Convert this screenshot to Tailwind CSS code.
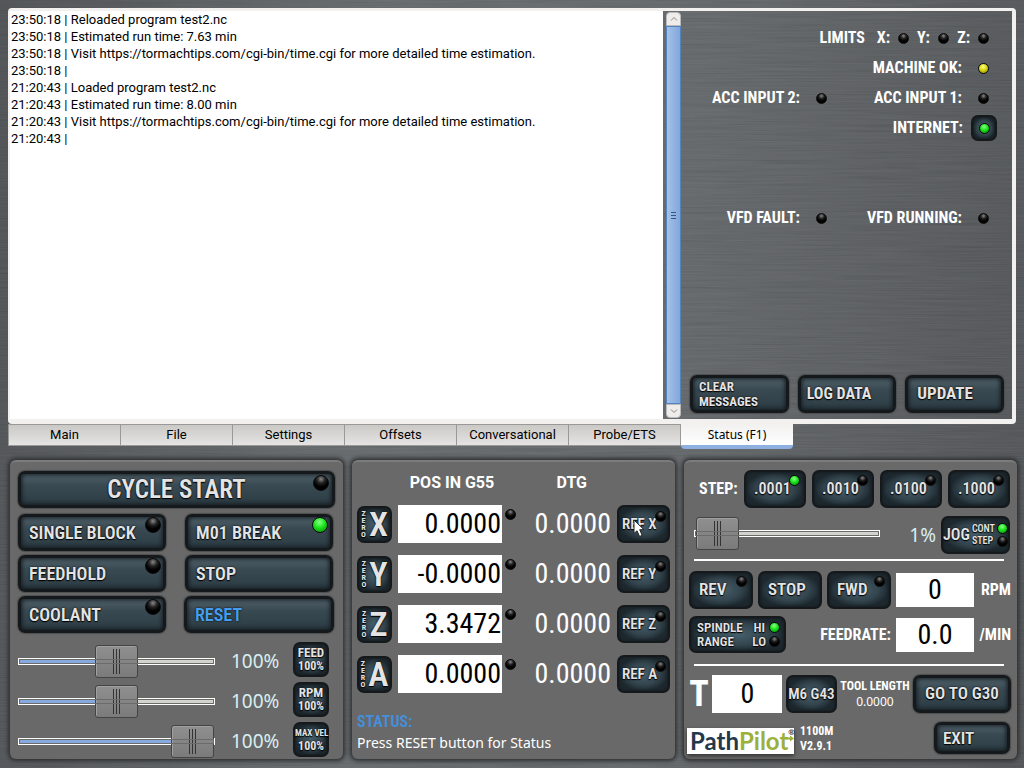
<!DOCTYPE html>
<html lang="en">
<head>
    <meta charset="UTF-8">
    <meta name="viewport" content="width=device-width, initial-scale=1.0">
    <title>PathPilot</title>
    <script src="https://cdn.jsdelivr.net/npm/@tailwindcss/browser@4"></script>
    <style>
        /* Button faces */
        .key {
            border: 3px solid #15191b;
            border-radius: 7px;
            background: linear-gradient(#50616a, #394952 38%, #33434b 70%, #293940);
            box-shadow: inset 0 0 4px 1px #141c20, 0 0 1px 1px #4c4e4f;
        }
        .key-sm {
            border: 2px solid #15191b;
            border-radius: 7px;
            background: radial-gradient(closest-side, #46606c, #33444d 65%, #1d282e);
            box-shadow: inset 0 0 3px #10171a;
        }
        .key-text {
            color: #e4e4e4;
            text-shadow: 0 0 2px #000, 0 1px 1px #000;
        }

        /* Indicator lamps */
        .led {
            flex: none;
            width: 11px;
            height: 11px;
            border: 1px solid #0a0a0a;
            border-radius: 50%;
            background: radial-gradient(circle at 50% 22%, #888 0, #222 32%, #000 60%);
        }
        .led-lg { width: 16px; height: 16px; }
        .led-green { background: radial-gradient(circle at 45% 30%, #8f8 0, #1be41b 45%, #067a06 100%); }
        .led-yellow { background: radial-gradient(circle at 45% 30%, #ff8 0, #d8d810 45%, #7a7a06 100%); }

        /* Sliders */
        .slider { appearance: none; background: none; }
        .slider::-webkit-slider-runnable-track {
            height: 7px;
            border: 1px solid #fff;
            outline: 1px solid #6b6b6b;
            outline-offset: -2px;
            background: linear-gradient(90deg, #86aadb var(--fill), #d3d3cd var(--fill));
        }
        .slider::-webkit-slider-thumb {
            appearance: none;
            width: 43px;
            height: 33px;
            margin-top: -14px;
            border: 1px solid #444;
            border-radius: 3px;
            background:
                linear-gradient(#333, #333) 17px 50% / 1px 25px no-repeat,
                linear-gradient(#333, #333) 20px 50% / 1px 25px no-repeat,
                linear-gradient(#333, #333) 23px 50% / 1px 25px no-repeat,
                linear-gradient(#8f8f8f, #7b7b7b);
            box-shadow: inset 1px 1px 0 #a0a0a0;
        }
    </style>
</head>
<body class="relative isolate min-h-screen flex flex-col bg-[linear-gradient(95deg,#45484b,#5d6265_35%,#5c6063_65%,#484b4e)] font-['Roboto_Condensed',sans-serif] text-white">

    <!-- Brushed metal -->
    <svg class="absolute inset-0 -z-10 w-full h-full opacity-20" aria-hidden="true">
        <filter id="brushed">
            <feTurbulence type="fractalNoise" baseFrequency="0.012 0.7" numOctaves="3" seed="4"/>
            <feColorMatrix type="saturate" values="0"/>
            <feComponentTransfer><feFuncA type="linear" slope="0" intercept="0.6"/></feComponentTransfer>
        </filter>
        <rect width="100%" height="100%" filter="url(#brushed)"/>
    </svg>

    <!-- Notebook -->
    <main class="flex-1 flex flex-col mx-2 mt-2">
        <div class="flex-1 flex border-2 border-b-[5px] border-[#f2f1f0] border-t-[3px] border-r-4 rounded-sm">
            <div role="log" class="flex-1 bg-white text-black font-[Roboto] text-[13px] leading-[17px] pl-px">
                <p>23:50:18 | Reloaded program test2.nc</p>
                <p>23:50:18 | Estimated run time: 7.63 min</p>
                <p>23:50:18 | Visit https://tormachtips.com/cgi-bin/time.cgi for more detailed time estimation.</p>
                <p>23:50:18 |</p>
                <p>21:20:43 | Loaded program test2.nc</p>
                <p>21:20:43 | Estimated run time: 8.00 min</p>
                <p>21:20:43 | Visit https://tormachtips.com/cgi-bin/time.cgi for more detailed time estimation.</p>
                <p>21:20:43 |</p>
            </div>

            <!-- Scrollbar -->
            <div class="w-[15px] ml-[3px] my-px flex flex-col">
                <button aria-label="Scroll up" class="h-[14px] bg-[#eeedeb] border border-[#bbb] rounded-t flex items-center justify-center">
                    <svg class="w-2 h-2" viewBox="0 0 8 8" fill="none" stroke="#888"><path d="M1 5.500L4 2.500L7 5.500"/></svg>
                </button>
                <div class="flex-1 flex flex-col items-center justify-center gap-[2px] border border-[#5583bd] bg-linear-to-r from-[#a3c1ea] to-[#82a7da]">
                    <span class="w-[5px] h-px bg-[#31578c]"></span>
                    <span class="w-[5px] h-px bg-[#31578c]"></span>
                    <span class="w-[5px] h-px bg-[#31578c]"></span>
                </div>
                <button aria-label="Scroll down" class="h-[14px] bg-[#eeedeb] border border-[#bbb] rounded-b flex items-center justify-center">
                    <svg class="w-2 h-2" viewBox="0 0 8 8" fill="none" stroke="#888"><path d="M1 2.500L4 5.500L7 2.500"/></svg>
                </button>
            </div>

            <!-- Machine status -->
            <section class="w-[331px] flex flex-col pt-3 pb-[6px] font-bold text-[16px]">
                <div class="grid grid-cols-[1fr_162px] auto-rows-[30px] pr-[23px]">
                    <div class="col-span-2 flex items-center justify-end">
                        <span class="mr-1">LIMITS</span>
                        <div class="w-10 flex items-center justify-end gap-2">X:<span class="led"></span></div>
                        <div class="w-10 flex items-center justify-end gap-2">Y:<span class="led"></span></div>
                        <div class="w-10 flex items-center justify-end gap-2">Z:<span class="led"></span></div>
                    </div>
                    <div class="col-start-2 flex items-center justify-end gap-4">MACHINE OK:<span class="led led-yellow"></span></div>
                    <div class="col-start-1 flex items-center justify-end gap-4">ACC INPUT 2:<span class="led"></span></div>
                    <div class="flex items-center justify-end gap-4">ACC INPUT 1:<span class="led"></span></div>
                    <div class="col-start-2 flex items-center justify-end gap-2 -mr-2">INTERNET:
                        <button aria-label="Internet" class="key-sm w-[26px] h-[26px] flex items-center justify-center"><span class="led led-green"></span></button>
                    </div>
                    <div class="row-start-7 flex items-center justify-end gap-4">VFD FAULT:<span class="led"></span></div>
                    <div class="row-start-7 flex items-center justify-end gap-4">VFD RUNNING:<span class="led"></span></div>
                </div>
                <div class="mt-auto grid grid-cols-3 gap-[9px] pl-[9px] pr-2">
                    <button class="key h-[38px] pl-[6px] text-left"><span class="key-text block text-[13px] leading-[15px]">CLEAR<br>MESSAGES</span></button>
                    <button class="key h-[38px] pl-[6px] text-left"><span class="key-text text-[16px]">LOG DATA</span></button>
                    <button class="key h-[38px] pl-[9px] text-left"><span class="key-text text-[17px]">UPDATE</span></button>
                </div>
            </section>
        </div>

        <nav role="tablist" class="flex h-[25px] items-start text-black font-[Roboto] text-[13px]">
            <button role="tab" class="w-[113px] h-[22px] border border-[#999] bg-linear-to-b from-[#cbc9c6] to-[#e6e4e2]">Main</button>
            <button role="tab" class="w-28 h-[22px] border border-l-0 border-[#999] bg-linear-to-b from-[#cbc9c6] to-[#e6e4e2]">File</button>
            <button role="tab" class="w-28 h-[22px] border border-l-0 border-[#999] bg-linear-to-b from-[#cbc9c6] to-[#e6e4e2]">Settings</button>
            <button role="tab" class="w-28 h-[22px] border border-l-0 border-[#999] bg-linear-to-b from-[#cbc9c6] to-[#e6e4e2]">Offsets</button>
            <button role="tab" class="w-28 h-[22px] border border-l-0 border-[#999] bg-linear-to-b from-[#cbc9c6] to-[#e6e4e2]">Conversational</button>
            <button role="tab" class="w-28 h-[22px] border border-l-0 border-[#999] bg-linear-to-b from-[#cbc9c6] to-[#e6e4e2]">Probe/ETS</button>
            <button role="tab" aria-selected="true" class="w-28 h-[25px] border-b-4 border-[#8db0e0] rounded-b-sm bg-linear-to-b from-[#f2f1f0] to-white font-['Noto_Sans'] text-[12px]">Status (F1)</button>
        </nav>
    </main>

    <div class="grid grid-cols-[333fr_323fr_333fr] gap-[9px] mt-[11px] mb-[9px] ml-[10px] mr-[7px]">

        <!-- Program control -->
        <section class="bg-[#696969] rounded-md border-t-2 border-[#7c7c7c] shadow-[0_0_4px_2px_#2d2f31] px-2 pt-[9px] pb-[2px]">
            <button class="key relative w-full h-[37px]"><span class="key-text font-semibold text-[25px] leading-[30px]">CYCLE START</span><span class="led led-lg absolute right-[3px] top-[1px]"></span></button>
            <div class="grid grid-cols-2 gap-x-[19px] gap-y-1 mt-[6px] pr-[2px] font-semibold text-[18px]">
                <button class="key relative h-[37px] pl-2 text-left"><span class="key-text">SINGLE BLOCK</span><span class="led led-lg absolute right-[2px] top-0"></span></button>
                <button class="key relative h-[37px] pl-2 text-left"><span class="key-text">M01 BREAK</span><span class="led led-lg led-green absolute right-[2px] top-0"></span></button>
                <button class="key relative h-[37px] pl-2 text-left"><span class="key-text">FEEDHOLD</span><span class="led led-lg absolute right-[2px] top-0"></span></button>
                <button class="key h-[37px] pl-2 text-left"><span class="key-text">STOP</span></button>
                <button class="key relative h-[37px] pl-2 text-left"><span class="key-text">COOLANT</span><span class="led led-lg absolute right-[2px] top-0"></span></button>
                <button class="key h-[37px] pl-2 text-left -mx-px"><span class="text-[#459df0] [text-shadow:0_0_2px_#000]">RESET</span></button>
            </div>
            <div class="mt-[9px] pr-[6px] flex flex-col gap-[5px]">
                <div class="flex items-center h-[35px]">
                    <input type="range" aria-label="Feed override" min="0" max="200" value="100" class="slider flex-1 min-w-0 h-[37px] pt-1" style="--fill: 50%">
                    <output class="w-[78px] pl-4 pt-1 font-['Noto_Sans'] text-[19px] text-[#d9eef0]">100%</output>
                    <button class="key-sm w-9 h-[35px] font-bold"><span class="key-text block text-[13px] leading-[14px]">FEED</span><span class="key-text block text-[12px] leading-[13px]">100%</span></button>
                </div>
                <div class="flex items-center h-[35px]">
                    <input type="range" aria-label="RPM override" min="0" max="200" value="100" class="slider flex-1 min-w-0 h-[37px] pt-1" style="--fill: 50%">
                    <output class="w-[78px] pl-4 pt-1 font-['Noto_Sans'] text-[19px] text-[#d9eef0]">100%</output>
                    <button class="key-sm w-9 h-[35px] font-bold"><span class="key-text block text-[13px] leading-[14px]">RPM</span><span class="key-text block text-[12px] leading-[13px]">100%</span></button>
                </div>
                <div class="flex items-center h-[35px]">
                    <input type="range" aria-label="Max velocity" min="0" max="100" value="100" class="slider flex-1 min-w-0 h-[37px] pt-1" style="--fill: 99%">
                    <output class="w-[78px] pl-4 pt-1 font-['Noto_Sans'] text-[19px] text-[#d9eef0]">100%</output>
                    <button class="key-sm w-9 h-[35px] font-bold whitespace-nowrap"><span class="key-text block text-[9px] leading-[14px]">MAX VEL</span><span class="key-text block text-[12px] leading-[13px]">100%</span></button>
                </div>
            </div>
        </section>

        <!-- Position readout -->
        <section class="bg-[#696969] rounded-md border-t-2 border-[#7c7c7c] shadow-[0_0_4px_2px_#2d2f31] px-[5px] pt-[5px]">
            <table class="w-full table-fixed">
                <thead>
                    <tr class="h-8 font-[Roboto] text-[16px]">
                        <th class="w-[41px]"></th>
                        <th class="w-[104px] font-bold whitespace-nowrap pl-1">POS IN G55</th>
                        <th class="font-bold text-right pr-[30px]">DTG</th>
                        <th class="w-[53px]"></th>
                    </tr>
                </thead>
                <tbody>
                    <tr class="h-[50px]">
                        <td><button aria-label="Zero X" class="key-sm w-[35px] h-[37px] flex items-center justify-center gap-[3px]"><span class="key-text text-[8px] leading-[7px] font-bold">Z<br>E<br>R<br>O</span><span class="key-text text-[34px] leading-[32px] font-semibold">X</span></button></td>
                        <td><input type="text" aria-label="X position" value="0.0000" class="block w-full h-[38px] bg-white text-black text-[28px] text-right pr-[1px]"></td>
                        <td class="pr-[6px]"><div class="flex justify-between pl-[3px]"><span class="led mt-1"></span><span class="text-[28px] leading-[38px]">0.0000</span></div></td>
                        <td class="relative"><button class="key-sm relative w-full h-[38px] font-semibold text-left pl-[3px]"><span class="key-text text-[15px] whitespace-nowrap">REF X</span><span class="led absolute right-[2px] top-1"></span></button>
                            <svg class="absolute left-4 top-[20px] w-[13px] h-[19px]" viewBox="0 0 13 19" aria-hidden="true"><path d="M1 1V14.500L4 11.800L6.600 17.500L9.200 16.300L6.700 10.700H11Z" fill="#fff" stroke="#222"/></svg>
                        </td>
                    </tr>
                    <tr class="h-[50px]">
                        <td><button aria-label="Zero Y" class="key-sm w-[35px] h-[37px] flex items-center justify-center gap-[3px]"><span class="key-text text-[8px] leading-[7px] font-bold">Z<br>E<br>R<br>O</span><span class="key-text text-[34px] leading-[32px] font-semibold">Y</span></button></td>
                        <td><input type="text" aria-label="Y position" value="-0.0000" class="block w-full h-[38px] bg-white text-black text-[28px] text-right pr-[1px]"></td>
                        <td class="pr-[6px]"><div class="flex justify-between pl-[3px]"><span class="led mt-1"></span><span class="text-[28px] leading-[38px]">0.0000</span></div></td>
                        <td><button class="key-sm relative w-full h-[38px] font-semibold text-left pl-[3px]"><span class="key-text text-[15px] whitespace-nowrap">REF Y</span><span class="led absolute right-[2px] top-1"></span></button></td>
                    </tr>
                    <tr class="h-[50px]">
                        <td><button aria-label="Zero Z" class="key-sm w-[35px] h-[37px] flex items-center justify-center gap-[3px]"><span class="key-text text-[8px] leading-[7px] font-bold">Z<br>E<br>R<br>O</span><span class="key-text text-[34px] leading-[32px] font-semibold">Z</span></button></td>
                        <td><input type="text" aria-label="Z position" value="3.3472" class="block w-full h-[38px] bg-white text-black text-[28px] text-right pr-[1px]"></td>
                        <td class="pr-[6px]"><div class="flex justify-between pl-[3px]"><span class="led mt-1"></span><span class="text-[28px] leading-[38px]">0.0000</span></div></td>
                        <td><button class="key-sm relative w-full h-[38px] font-semibold text-left pl-[3px]"><span class="key-text text-[15px] whitespace-nowrap">REF Z</span><span class="led absolute right-[2px] top-1"></span></button></td>
                    </tr>
                    <tr class="h-[50px]">
                        <td><button aria-label="Zero A" class="key-sm w-[35px] h-[37px] flex items-center justify-center gap-[3px]"><span class="key-text text-[8px] leading-[7px] font-bold">Z<br>E<br>R<br>O</span><span class="key-text text-[34px] leading-[32px] font-semibold">A</span></button></td>
                        <td><input type="text" aria-label="A position" value="0.0000" class="block w-full h-[38px] bg-white text-black text-[28px] text-right pr-[1px]"></td>
                        <td class="pr-[6px]"><div class="flex justify-between pl-[3px]"><span class="led mt-1"></span><span class="text-[28px] leading-[38px]">0.0000</span></div></td>
                        <td><button class="key-sm relative w-full h-[38px] font-semibold text-left pl-[3px]"><span class="key-text text-[15px] whitespace-nowrap">REF A</span><span class="led absolute right-[2px] top-1"></span></button></td>
                    </tr>
                </tbody>
            </table>
            <p class="mt-3 text-[16px] leading-[22px] font-semibold text-[#4390dc]">STATUS:</p>
            <p class="font-['Noto_Sans'] text-[14px] leading-5">Press RESET button for Status</p>
        </section>

        <!-- Jog, spindle and tool -->
        <section class="bg-[#696969] rounded-md border-t-2 border-[#7c7c7c] shadow-[0_0_4px_2px_#2d2f31] pl-[5px] pr-[6px] pt-2 font-semibold whitespace-nowrap">
            <div class="flex items-center gap-[6px] pl-[10px] pr-px">
                <span class="mr-auto text-[16px] font-bold">STEP:</span>
                <button class="key-sm relative w-[62px] h-[38px] text-left pl-2"><span class="key-text text-[16px]">.0001</span><span class="led led-green absolute right-1 top-[3px]"></span></button>
                <button class="key-sm relative w-[62px] h-[38px] text-left pl-2"><span class="key-text text-[16px]">.0010</span><span class="led absolute right-1 top-[3px]"></span></button>
                <button class="key-sm relative w-[62px] h-[38px] text-left pl-2"><span class="key-text text-[16px]">.0100</span><span class="led absolute right-1 top-[3px]"></span></button>
                <button class="key-sm relative w-[62px] h-[38px] text-left pl-2"><span class="key-text text-[16px]">.1000</span><span class="led absolute right-1 top-[3px]"></span></button>
            </div>
            <div class="flex items-center mt-2 pl-[5px] pr-px">
                <input type="range" aria-label="Jog speed" min="0" max="100" value="1" class="slider flex-1 min-w-0 h-[33px] mb-1" style="--fill: 1%">
                <output class="w-[61px] pr-[5px] text-right font-['Noto_Sans'] font-normal text-[19px] text-[#d9eef0]">1%</output>
                <button class="key-sm w-[69px] h-[38px] flex items-center justify-center gap-[2px]">
                    <span class="key-text text-[16px]">JOG</span>
                    <span class="key-text text-[10px] leading-[12px] text-left">CONT<br>STEP</span>
                    <span class="flex flex-col gap-[2px]"><span class="led led-green"></span><span class="led"></span></span>
                </button>
            </div>
            <hr class="mt-[5px] ml-[5px] mr-[7px] border-t-2 border-white">
            <div class="grid grid-cols-[1fr_78px_32px] items-center gap-x-[5px] mt-[10px]">
                <div class="flex justify-between">
                    <button class="key-sm relative w-[64px] h-[38px] text-left pl-2"><span class="key-text text-[17px]">REV</span><span class="led absolute right-1 top-[3px]"></span></button>
                    <button class="key-sm w-[64px] h-[38px] text-left pl-2"><span class="key-text text-[17px]">STOP</span></button>
                    <button class="key-sm relative w-[64px] h-[38px] text-left pl-2"><span class="key-text text-[17px]">FWD</span><span class="led absolute right-1 top-[3px]"></span></button>
                </div>
                <input id="rpm" type="text" value="0" class="w-full h-[34px] bg-white text-black font-normal text-[28px] text-center">
                <label for="rpm" class="text-[16px] font-bold text-right">RPM</label>
            </div>
            <div class="grid grid-cols-[1fr_78px_32px] items-center gap-x-[5px] mt-[7px]">
                <div class="flex items-center justify-between">
                    <button class="key-sm w-[97px] h-[37px] flex items-center justify-between pl-[6px] pr-1">
                        <span class="key-text text-[13px] leading-[14px] text-left">SPINDLE<br>RANGE</span>
                        <span class="flex gap-[3px] items-center"><span class="key-text text-[13px] leading-[14px]">HI<br>LO</span><span class="flex flex-col gap-[3px]"><span class="led led-green"></span><span class="led"></span></span></span>
                    </button>
                    <label for="feedrate" class="text-[16px] font-bold">FEEDRATE:</label>
                </div>
                <input id="feedrate" type="text" value="0.0" class="w-full h-[34px] bg-white text-black font-normal text-[28px] text-center">
                <span class="text-[16px] font-bold text-right">/MIN</span>
            </div>
            <hr class="mt-[11px] ml-[5px] mr-[7px] border-t-2 border-white">
            <div class="flex items-center justify-between mt-[9px]">
                <label for="tool" class="text-[36px] leading-[38px] font-bold w-5 text-center">T</label>
                <input id="tool" type="text" value="0" class="w-[70px] h-[38px] bg-white text-black font-normal text-[28px] text-center">
                <button class="key-sm w-[51px] h-[38px]"><span class="key-text text-[15px]">M6 G43</span></button>
                <div class="text-center text-[12px] leading-[16px] font-bold">TOOL LENGTH<br><span class="font-['Noto_Sans'] font-normal">0.0000</span></div>
                <button class="key w-[98px] h-[38px]"><span class="key-text text-[17px]">GO TO G30</span></button>
            </div>
            <div class="flex items-end mt-[9px] pr-px">
                <div class="relative w-[107px] h-[26px] -ml-[2px] bg-white shadow-[0_2px_4px_#333] font-[Lato] font-bold text-[24px] leading-[26px] text-[#24384b] pl-[3px] flex items-start"><span>Path</span><span class="text-[#9cb03a]">Pilot</span><span class="text-[8px] leading-[9px]">®</span>
                    <svg class="absolute right-0 top-[7px] w-[9px] h-[7px]" viewBox="0 0 9 7" aria-hidden="true"><path d="M0 2.500H5V.5L9 3.500L5 6.500V4.500H0Z" fill="#9cb03a"/></svg>
                </div>
                <div class="ml-[6px] text-[12px] leading-[15px] font-bold">1100M<br>V2.9.1</div>
                <button class="key w-[76px] h-[32px] ml-auto text-left pl-[6px]"><span class="key-text block text-[17px] leading-[24px]">EXIT</span></button>
            </div>
        </section>
    </div>
</body>
</html>
